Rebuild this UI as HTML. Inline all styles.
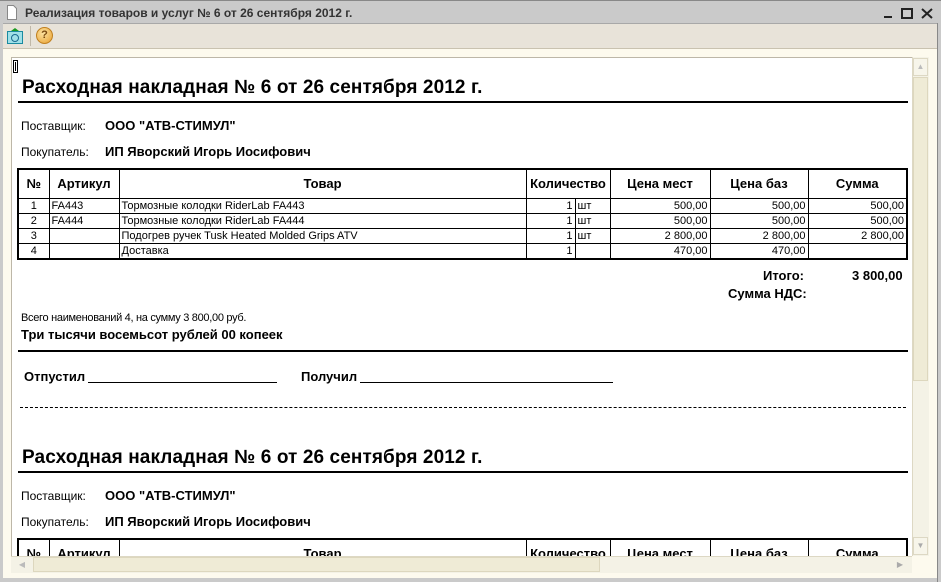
<!DOCTYPE html>
<html><head><meta charset="utf-8"><style>
*{margin:0;padding:0;box-sizing:border-box}
body{width:941px;height:582px;overflow:hidden;background:#cacaca;font-family:"Liberation Sans",Arial,sans-serif;position:relative;color:#000}
.abs{position:absolute}
#title{left:0;top:0;width:941px;height:23px;background:#cacaca;border-top:1px solid #888;}
#tb{left:3px;top:23px;width:934px;height:25px;background:#e8e3d9;border-top:1px solid #a8a8a8}
#strip{left:3px;top:48px;width:934px;height:530px;background:#fdfaee;border-top:1px solid #c9c2b0}
#clip{left:11px;top:57px;width:901px;height:499px;overflow:hidden;background:#fff;border-left:1px solid #bdb7a8;border-top:1px solid #bdb7a8}
.copy{position:absolute;left:-12px;width:920px;height:420px;overflow:hidden}
.h1{position:absolute;left:22px;font-size:19px;letter-spacing:0.1px;font-weight:bold;white-space:nowrap}
.hr{position:absolute;left:18px;width:890px;height:2px;background:#000}
.t{position:absolute;font-size:12px;white-space:nowrap}
.b{font-weight:bold;font-size:13px}
table{position:absolute;left:17px;border-collapse:collapse;border:2px solid #000;font-size:11px}
td{border:1px solid #000;height:15px;padding:1px 2px 0;line-height:13px;white-space:nowrap}
th{border:1px solid #000;height:29px;font-size:13px;font-weight:bold}
.r{text-align:right}.c{text-align:center}
</style></head><body>
<div id="title" class="abs">
<svg class="abs" style="left:6px;top:4px" width="12" height="15"><path d="M1.5 .5h6l3 3v11h-9z" fill="#fff" stroke="#888"/></svg>
<div class="abs" style="left:25px;top:5px;font-size:12px;font-weight:bold;color:#333">Реализация товаров и услуг № 6 от 26 сентября 2012 г.</div>
<div class="abs" style="left:884px;top:15px;width:8px;height:2px;background:#222"></div>
<div class="abs" style="left:901px;top:7px;width:12px;height:11px;border:2px solid #222"></div>
<svg class="abs" style="left:921px;top:7px" width="12" height="11"><path d="M1 1l10 9M11 1l-10 9" stroke="#222" stroke-width="2"/></svg>
</div>
<div id="tb" class="abs">
<svg class="abs" style="left:4px;top:4px" width="16" height="16"><rect x=".5" y="3.5" width="15" height="12" fill="#9fe0e8" stroke="#1a8aa0"/><path d="M4 3l4-3 4 3z" fill="#1a9a20"/><circle cx="8" cy="10" r="3.5" fill="none" stroke="#1a6a90"/></svg>
<div class="abs" style="left:27px;top:2px;width:1px;height:20px;background:#c0b8a8"></div>
<div class="abs" style="left:33px;top:3px;width:17px;height:17px;border-radius:50%;background:radial-gradient(circle at 40% 35%,#fce2a0,#e8a030);border:1px solid #c08020;font-size:11px;font-weight:bold;color:#7a4a10;text-align:center;line-height:15px">?</div>
</div>
<div id="strip" class="abs"></div>
<div id="clip" class="abs">
<div style="position:absolute;left:1px;top:2px;width:5px;height:13px;background:#000;border:1px solid #000;box-shadow:inset 0 0 0 1px #fff"></div>
<div class="copy" style="top:-57px">
<div class="h1" style="top:76px">Расходная накладная № 6 от 26 сентября 2012 г.</div>
<div class="hr" style="top:100px"></div>
<div class="t" style="left:21px;top:118px">Поставщик:</div><div class="t b" style="left:105px;top:117px">ООО "АТВ-СТИМУЛ"</div>
<div class="t" style="left:21px;top:144px">Покупатель:</div><div class="t b" style="left:105px;top:143px">ИП Яворский Игорь Иосифович</div>
<table style="top:167px;width:891px">
<colgroup><col style="width:31px"><col style="width:70px"><col style="width:407px"><col style="width:49px"><col style="width:35px"><col style="width:100px"><col style="width:98px"><col style="width:99px"></colgroup>
<tr><th>№</th><th>Артикул</th><th>Товар</th><th colspan="2">Количество</th><th>Цена мест</th><th>Цена баз</th><th>Сумма</th></tr>
<tr><td class="c">1</td><td>FA443</td><td>Тормозные колодки RiderLab FA443</td><td class="r">1</td><td>шт</td><td class="r">500,00</td><td class="r">500,00</td><td class="r">500,00</td></tr>
<tr><td class="c">2</td><td>FA444</td><td>Тормозные колодки RiderLab FA444</td><td class="r">1</td><td>шт</td><td class="r">500,00</td><td class="r">500,00</td><td class="r">500,00</td></tr>
<tr><td class="c">3</td><td></td><td>Подогрев ручек Tusk Heated Molded Grips ATV</td><td class="r">1</td><td>шт</td><td class="r">2 800,00</td><td class="r">2 800,00</td><td class="r">2 800,00</td></tr>
<tr><td class="c">4</td><td></td><td>Доставка</td><td class="r">1</td><td></td><td class="r">470,00</td><td class="r">470,00</td><td></td></tr>
</table>
<div class="t b" style="left:763px;top:267px">Итого:</div><div class="t b" style="left:852px;top:267px">3 800,00</div>
<div class="t b" style="left:728px;top:285px">Сумма НДС:</div>
<div class="t" style="left:21px;top:311px;font-size:11px;letter-spacing:-.3px">Всего наименований 4, на сумму 3 800,00 руб.</div>
<div class="t b" style="left:21px;top:326px">Три тысячи восемьсот рублей 00 копеек</div>
<div class="hr" style="top:349px"></div>
<div class="t b" style="left:24px;top:368px">Отпустил</div><div class="abs" style="left:88px;top:381px;width:189px;height:1px;background:#000"></div>
<div class="t b" style="left:301px;top:368px">Получил</div><div class="abs" style="left:360px;top:381px;width:253px;height:1px;background:#000"></div>
<div class="abs" style="left:20px;top:406px;width:886px;border-top:1px dashed #000"></div>
</div>
<div class="copy" style="top:313px;height:186px">
<div class="h1" style="top:76px">Расходная накладная № 6 от 26 сентября 2012 г.</div>
<div class="hr" style="top:100px"></div>
<div class="t" style="left:21px;top:118px">Поставщик:</div><div class="t b" style="left:105px;top:117px">ООО "АТВ-СТИМУЛ"</div>
<div class="t" style="left:21px;top:144px">Покупатель:</div><div class="t b" style="left:105px;top:143px">ИП Яворский Игорь Иосифович</div>
<table style="top:167px;width:891px">
<colgroup><col style="width:31px"><col style="width:70px"><col style="width:407px"><col style="width:49px"><col style="width:35px"><col style="width:100px"><col style="width:98px"><col style="width:99px"></colgroup>
<tr><th>№</th><th>Артикул</th><th>Товар</th><th colspan="2">Количество</th><th>Цена мест</th><th>Цена баз</th><th>Сумма</th></tr>
</table>
</div>
</div>
<div class="abs" style="left:912px;top:57px;width:17px;height:499px;background:#f4f2e6;border-left:1px solid #ddd8c4"></div>
<div class="abs" style="left:913px;top:58px;width:15px;height:18px;background:#f7f5ea;border:1px solid #ddd8c4;color:#bbb;font-size:8px;text-align:center;line-height:16px">▲</div>
<div class="abs" style="left:913px;top:77px;width:15px;height:304px;background:#efebd6;border:1px solid #ddd7be"></div>
<div class="abs" style="left:913px;top:537px;width:15px;height:18px;background:#f7f5ea;border:1px solid #ddd8c4;color:#aaa;font-size:8px;text-align:center;line-height:16px">▼</div>
<div class="abs" style="left:11px;top:556px;width:901px;height:17px;background:#f4f2e6;border-top:1px solid #ddd8c4"></div>
<div class="abs" style="left:12px;top:557px;width:20px;height:15px;color:#bbb;font-size:8px;line-height:15px;text-align:center">◀</div>
<div class="abs" style="left:33px;top:557px;width:567px;height:15px;background:#efebd6;border:1px solid #ddd7be"></div>
<div class="abs" style="left:890px;top:557px;width:20px;height:15px;color:#aaa;font-size:8px;line-height:15px;text-align:center">▶</div>
<div class="abs" style="left:937px;top:23px;width:4px;height:559px;background:#cacaca;border-left:1px solid #888"></div>
</body></html>
